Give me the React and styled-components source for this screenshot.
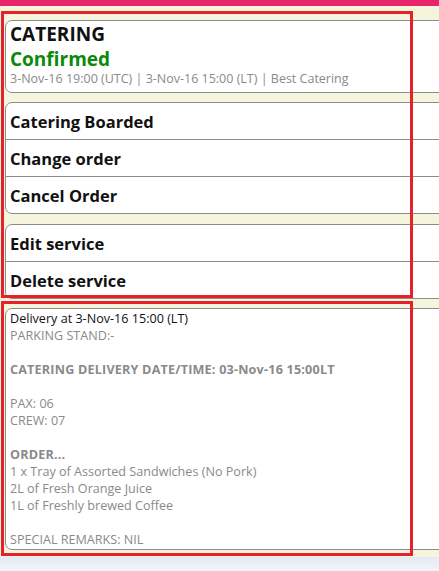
import React from 'react'
import styled, { createGlobalStyle } from 'styled-components'

const GlobalStyle = createGlobalStyle`
    html, body {
        margin: 0;
        padding: 0;
        overflow: hidden;
        background: #eef3f8;
    }
    * { box-sizing: border-box; }
`

const header = {
    title: "CATERING",
    status: "Confirmed",
    meta: "3-Nov-16 19:00 (UTC) | 3-Nov-16 15:00 (LT) | Best Catering",
}

const actions = ["Catering Boarded", "Change order", "Cancel Order"]
const serviceActions = ["Edit service", "Delete service"]

const details = [
    { text: "PARKING STAND:-" },
    { text: "" },
    { text: "CATERING DELIVERY DATE/TIME: 03-Nov-16 15:00LT", bold: true },
    { text: "" },
    { text: "PAX: 06" },
    { text: "CREW: 07" },
    { text: "" },
    { text: "ORDER...", bold: true },
    { text: "1 x Tray of Assorted Sandwiches (No Pork)" },
    { text: "2L of Fresh Orange Juice" },
    { text: "1L of Freshly brewed Coffee" },
    { text: "" },
    { text: "SPECIAL REMARKS: NIL" },
]

const App = () => {
    return (
        <Page>
            <GlobalStyle />
            <TopBar />
            <Content>
                <Card>
                    <Header>
                        <Title>{header.title}</Title>
                        <Status>{header.status}</Status>
                        <Meta>{header.meta}</Meta>
                    </Header>
                </Card>

                <Card>
                    {actions.map((a, idx) => (
                        <ActionRow key={idx}>{a}</ActionRow>
                    ))}
                </Card>

                <Card $spaced>
                    {serviceActions.map((a, idx) => (
                        <ActionRow key={idx}>{a}</ActionRow>
                    ))}
                </Card>

                <Card>
                    <Details>
                        <DetailTitle>Delivery at 3-Nov-16 15:00 (LT)</DetailTitle>
                        {details.map((d, idx) => (
                            <DetailLine key={idx} $bold={d.bold}>{d.text || "\u00a0"}</DetailLine>
                        ))}
                    </Details>
                </Card>
            </Content>
            <Footer />

            <Highlight $top={11} $height={287} />
            <Highlight $top={301} $height={255} />
        </Page>
    );
}

const Page = styled.div`
    position: relative;
    height: 571px;
    background: #f5f4dc;
    font-family: "Open Sans", "Noto Sans", sans-serif;
    display: flex;
    flex-direction: column;
`

const TopBar = styled.div`
    height: 6px;
    flex: none;
    background: #e8246a;
`

const Content = styled.div`
    display: flex;
    flex-direction: column;
    gap: 9px;
    padding: 14px 0 7px 5px;
`

const Card = styled.div`
    background: #fff;
    border: 1px solid #8c8c8c;
    border-radius: 7px;
    margin-right: -20px;
    margin-top: ${p => p.$spaced ? "1px" : "0"};
    overflow: hidden;
`

const Header = styled.div`
    padding: 0 4px 5px 4px;
    display: flex;
    flex-direction: column;
`

const Title = styled.div`
    font-size: 19px;
    font-weight: 700;
    color: #111;
    line-height: 26px;
`

const Status = styled.div`
    font-size: 19px;
    font-weight: 700;
    color: #0a8a0a;
    line-height: 24px;
`

const Meta = styled.div`
    font-size: 12.5px;
    color: #8a8a8a;
    line-height: 16px;
`

const ActionRow = styled.div`
    box-sizing: content-box;
    height: 36px;
    display: flex;
    align-items: center;
    padding: 0 4px;
    font-size: 16.5px;
    font-weight: 700;
    color: #111;
    & + & {
        border-top: 1px solid #8c8c8c;
    }
`

const Details = styled.div`
    padding: 1px 4px 1px 4px;
    font-size: 12.6px;
    line-height: 17px;
`

const DetailTitle = styled.div`
    color: #111;
`

const DetailLine = styled.div`
    color: #8a8a8a;
    font-weight: ${p => p.$bold ? 700 : 400};
    letter-spacing: ${p => p.$bold ? "0.2px" : "0"};
    white-space: pre;
`

const Footer = styled.div`
    flex: 1;
    background: linear-gradient(#e3eaf3, #f1f5fa);
`

const Highlight = styled.div`
    position: absolute;
    left: 1px;
    top: ${p => p.$top}px;
    width: 412px;
    height: ${p => p.$height}px;
    border: 3px solid #e8202a;
    pointer-events: none;
`

export default App
